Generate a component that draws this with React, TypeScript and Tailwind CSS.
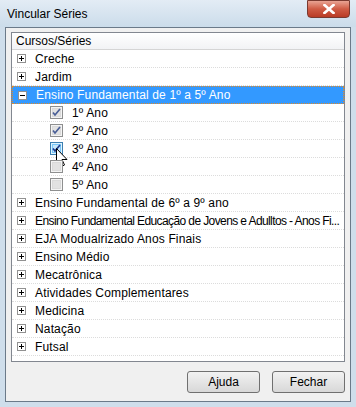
import { FC } from "react";

type Row =
    | { kind: "group"; label: string; open?: boolean; selected?: boolean; tight?: boolean }
    | { kind: "item"; label: string; checked: boolean; hover?: boolean };

const rows: Row[] = [
    { kind: "group", label: "Creche" },
    { kind: "group", label: "Jardim" },
    { kind: "group", label: "Ensino Fundamental de 1º a 5º Ano", open: true, selected: true },
    { kind: "item", label: "1º Ano", checked: true },
    { kind: "item", label: "2º Ano", checked: true },
    { kind: "item", label: "3º Ano", checked: true, hover: true },
    { kind: "item", label: "4º Ano", checked: false },
    { kind: "item", label: "5º Ano", checked: false },
    { kind: "group", label: "Ensino Fundamental de 6º a 9º ano" },
    { kind: "group", label: "Ensino Fundamental Educação de Jovens e Adulltos - Anos Fi...", tight: true },
    { kind: "group", label: "EJA Modualrizado Anos Finais" },
    { kind: "group", label: "Ensino Médio" },
    { kind: "group", label: "Mecatrônica" },
    { kind: "group", label: "Atividades Complementares" },
    { kind: "group", label: "Medicina" },
    { kind: "group", label: "Natação" },
    { kind: "group", label: "Futsal" },
];

const Expander: FC<{ open?: boolean }> = ({ open }) => (
    <svg width="9" height="9" viewBox="0 0 9 9" className="shrink-0">
        <rect x="0.5" y="0.5" width="8" height="8" fill="#fff" stroke="#919191" />
        <path d="M2 4.5h5" stroke="#000" />
        {open ? null : <path d="M4.5 2v5" stroke="#000" />}
    </svg>
);

const Check: FC<{ checked: boolean; hover?: boolean }> = ({ checked, hover }) => (
    <svg width="13" height="13" viewBox="0 0 13 13" className="shrink-0">
        <rect x="0.5" y="0.5" width="12" height="12" fill={hover ? "#def3fd" : "#f4f4f4"} stroke={hover ? "#3c7fb1" : "#8e8f8f"} />
        <rect x="2.5" y="2.5" width="8" height="8" fill={hover ? "#c7e8fa" : "#e2e2e2"} stroke={hover ? "#79c6f9" : "#dadada"} />
        {checked && (
            <path d="M3 6.5l2 2.5l5-6" fill="none" stroke={hover ? "#1c3a8e" : "#4a5f97"} strokeWidth="1.7" />
        )}
    </svg>
);

// mouse pointer hovering over the 3rd checkbox
const Cursor: FC = () => (
    <svg width="12" height="19" viewBox="0 0 12 19" className="absolute left-[44px] top-[8px]">
        <path d="M0.5 0.5v15l3.5-3.5l2.5 6l2-1l-2.5-5.5h5z" fill="#fff" stroke="#000" strokeLinejoin="round" />
    </svg>
);

const App: FC = () => {
    return (
        <div className="w-[356px] h-[407px] bg-[#cfdeeb] flex flex-col text-[12px] text-black"
            style={{ fontFamily: '"Liberation Sans", Arial, sans-serif' }}>
            {/* title bar */}
            <div className="h-[27px] flex items-start bg-gradient-to-b from-[#e3ecf5] to-[#cbdcea]">
                <div className="pl-[7px] pt-[5px] text-[12px] text-black">Vincular Séries</div>
                <div className="flex-grow"></div>
                <div className="mr-[6px] w-[43px] h-[18px] rounded-b-[4px] border border-[#7a3a30] bg-gradient-to-b from-[#e8a393] via-[#cf5b44] to-[#b93b25] flex items-center justify-center">
                    <svg width="12" height="10" viewBox="0 0 12 10">
                        <path d="M1.5 1l9 8M10.5 1l-9 8" stroke="#fff" strokeWidth="2.6" strokeLinecap="square" />
                    </svg>
                </div>
            </div>
            {/* client area */}
            <div className="mx-[5px] mb-[5px] flex-grow border border-[#6b7a89] bg-[#f0f0f0] flex flex-col">
                <div className="mx-[5px] mt-[4px] h-[330px] border border-[#828790] bg-white flex flex-col overflow-hidden">
                    <div className="h-[17px] shrink-0 flex items-center pl-[4px] border-b border-[#d5d5d5] bg-gradient-to-b from-[#ffffff] to-[#f2f3f5]">
                        Cursos/Séries
                    </div>
                    {rows.map((r, i) => (
                        <div key={i}
                            className={
                                r.kind === "group" && r.selected
                                    ? "h-[18px] shrink-0 flex items-center bg-[#3399ff] text-white border border-dotted border-[#e08a28]"
                                    : "h-[18px] shrink-0 flex items-center border-b border-dotted border-[#dcdcdc] relative"
                            }>
                            {r.kind === "group" ? (
                                <>
                                    <div className="pl-[5px] pr-[9px] flex"><Expander open={r.open} /></div>
                                    <div className={r.tight ? "whitespace-nowrap tracking-[-0.6px]" : "whitespace-nowrap tracking-[0.15px]"}>{r.label}</div>
                                </>
                            ) : (
                                <>
                                    <div className="pl-[38px] pr-[9px] flex"><Check checked={r.checked} hover={r.hover} /></div>
                                    <div className="whitespace-nowrap tracking-[0.15px]">{r.label}</div>
                                    {r.hover ? <Cursor /> : null}
                                </>
                            )}
                        </div>
                    ))}
                </div>
                <div className="flex-grow flex items-center justify-end gap-[12px] pr-[5px]">
                    <button className="w-[73px] h-[22px] rounded-[3px] border border-[#707070] bg-gradient-to-b from-[#f2f2f2] to-[#d8d8d8]">Ajuda</button>
                    <button className="w-[73px] h-[22px] rounded-[3px] border border-[#707070] bg-gradient-to-b from-[#f2f2f2] to-[#d8d8d8]">Fechar</button>
                </div>
            </div>
        </div>
    );
};

export default App;
